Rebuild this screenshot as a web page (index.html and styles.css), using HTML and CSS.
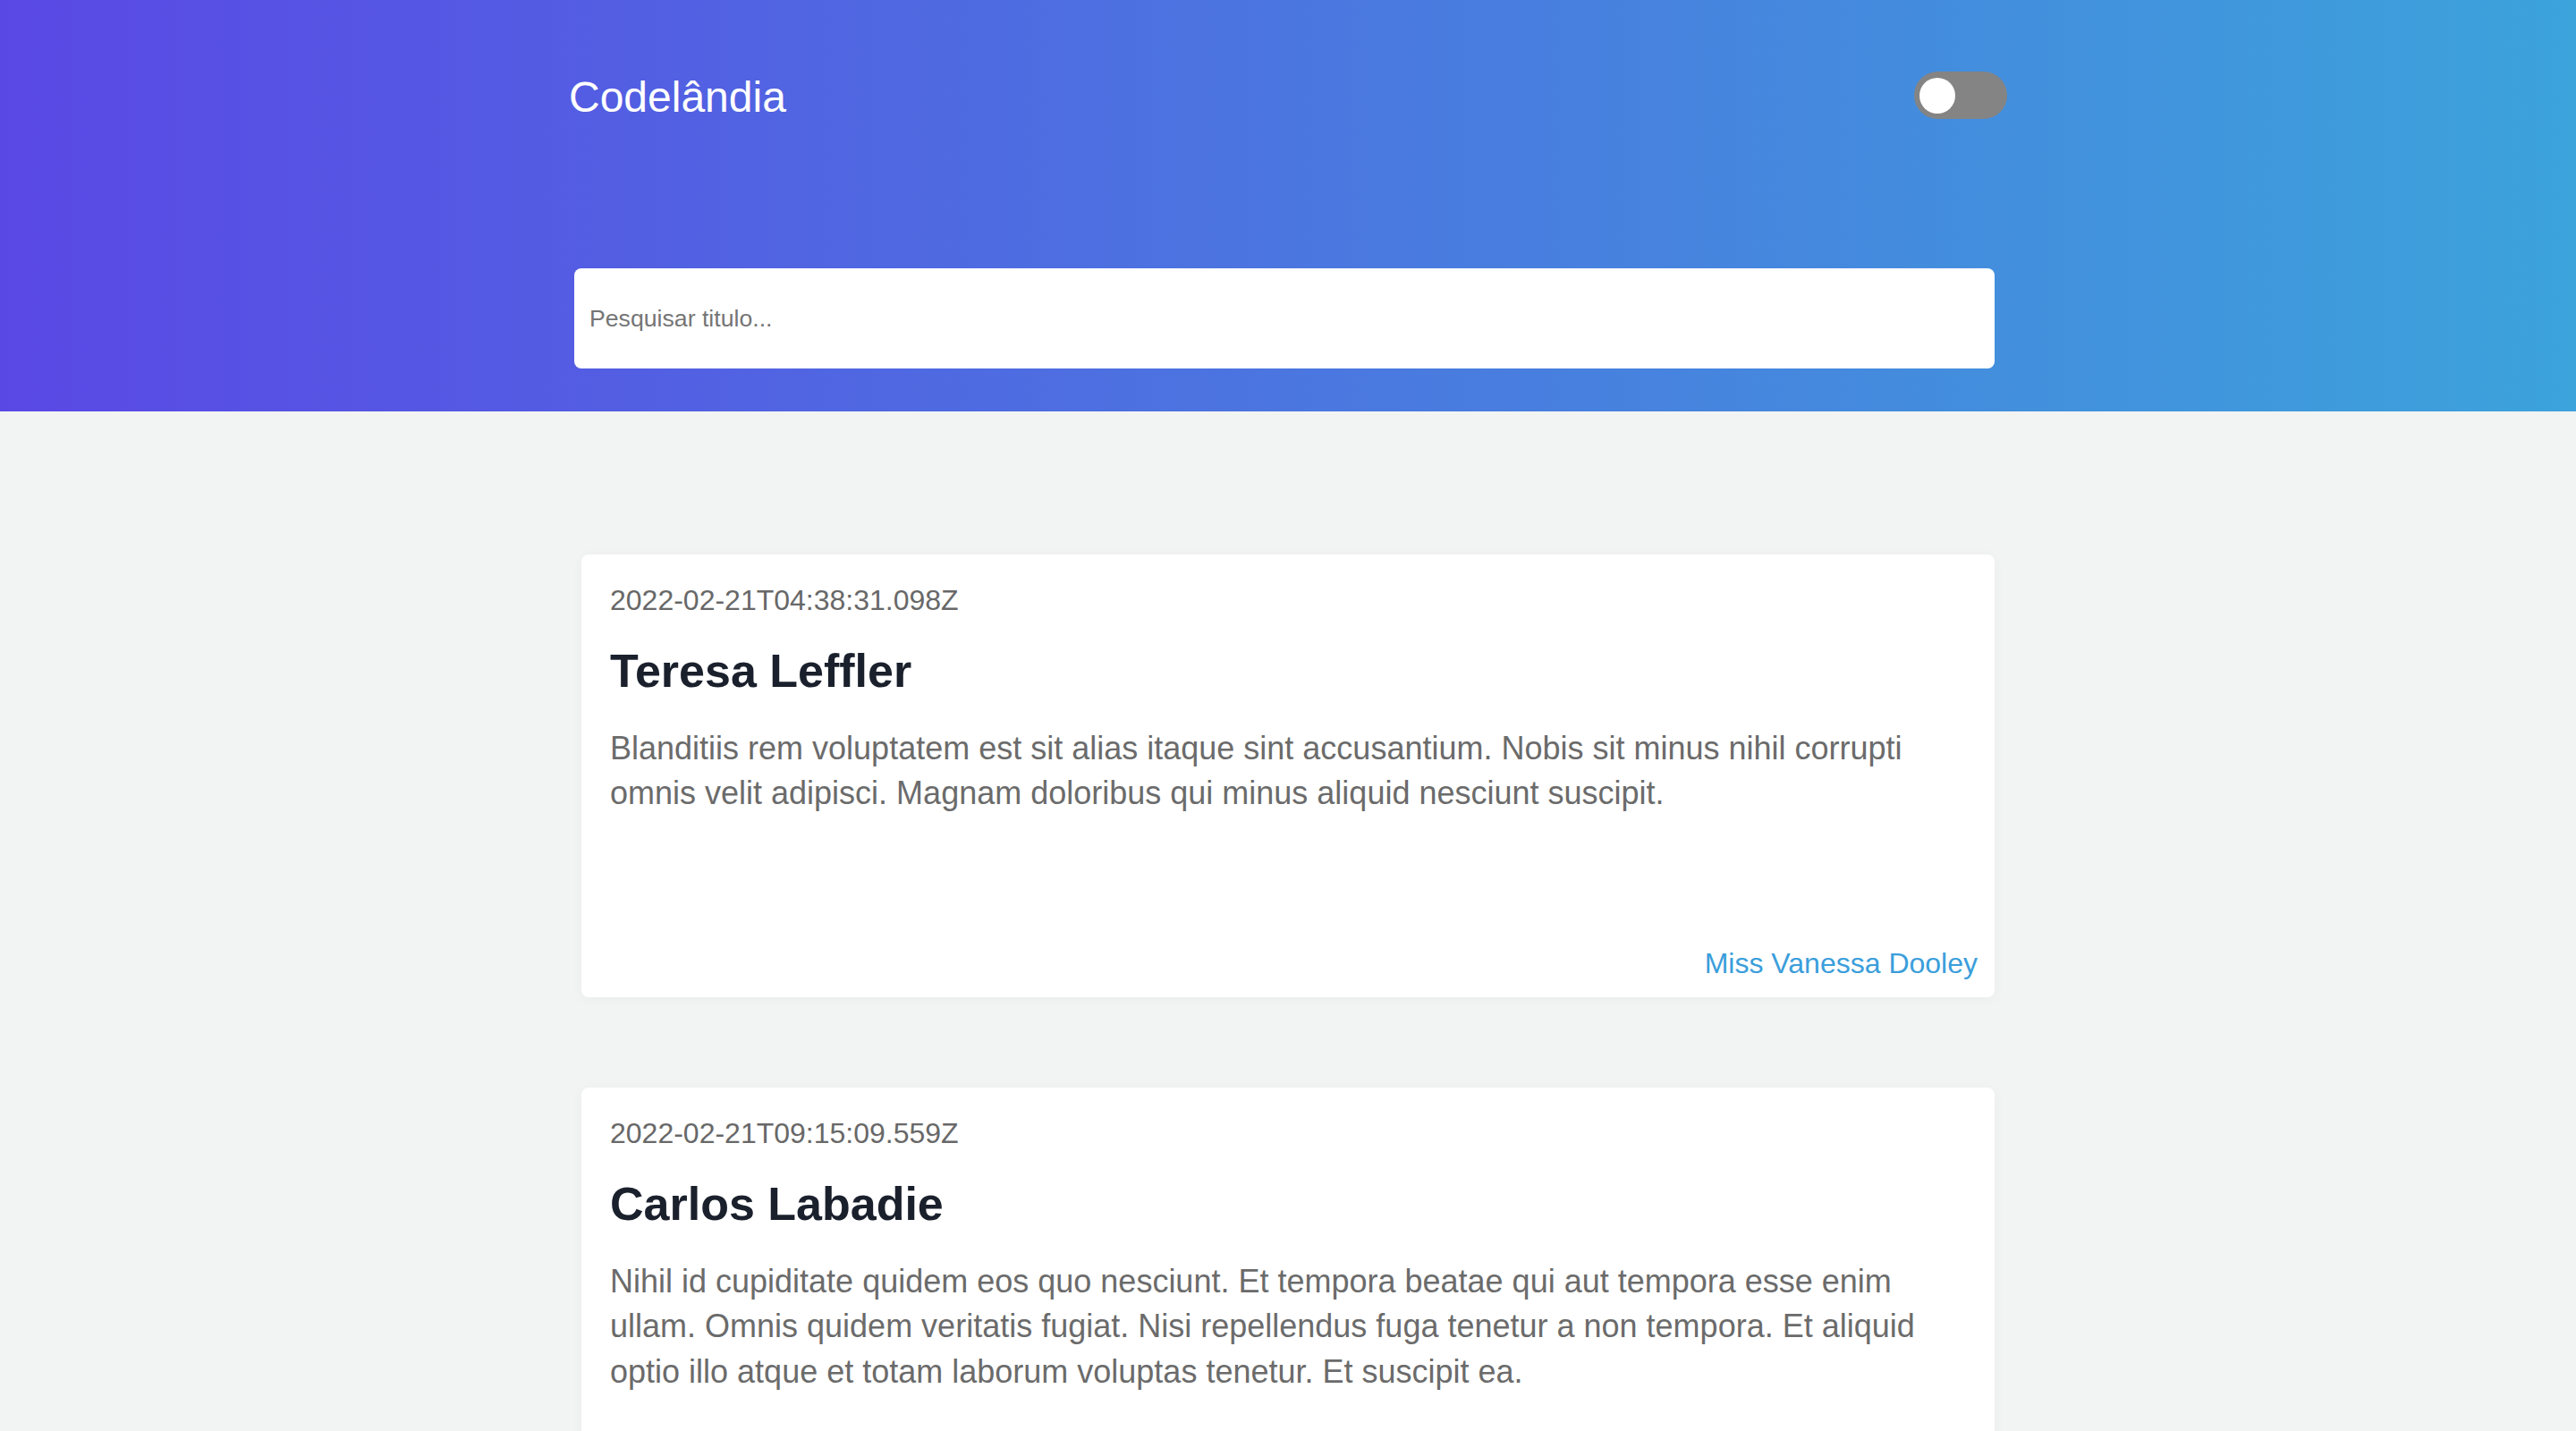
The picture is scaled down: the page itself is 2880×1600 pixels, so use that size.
FILE: index.html
```html
<!DOCTYPE html>
<html lang="pt-BR">
<head>
<meta charset="utf-8">
<title>Codelândia</title>
<link rel="stylesheet" href="styles.css">
</head>
<body>
<header class="header">
  <div class="header-inner">
    <div class="topbar">
      <h1 class="brand">Codelândia</h1>
      <label class="toggle"><span class="knob"></span></label>
    </div>
    <div class="search-wrap">
      <input class="search" type="text" placeholder="Pesquisar titulo...">
    </div>
  </div>
</header>
<main class="posts">
  <article class="card">
    <time class="date">2022-02-21T04:38:31.098Z</time>
    <h2 class="title">Teresa Leffler</h2>
    <p class="body">Blanditiis rem voluptatem est sit alias itaque sint accusantium. Nobis sit minus nihil corrupti omnis velit adipisci. Magnam doloribus qui minus aliquid nesciunt suscipit.</p>
    <span class="author">Miss Vanessa Dooley</span>
  </article>
  <article class="card">
    <time class="date">2022-02-21T09:15:09.559Z</time>
    <h2 class="title">Carlos Labadie</h2>
    <p class="body">Nihil id cupiditate quidem eos quo nesciunt. Et tempora beatae qui aut tempora esse enim ullam. Omnis quidem veritatis fugiat. Nisi repellendus fuga tenetur a non tempora. Et aliquid optio illo atque et totam laborum voluptas tenetur. Et suscipit ea.</p>
    <span class="author">Ms. Lorena Kuhn</span>
  </article>
</main>
</body>
</html>
```

FILE: styles.css
```css
* { box-sizing: border-box; }

html, body {
  margin: 0;
  padding: 0;
}

body {
  background: #f2f4f3;
  font-family: "Liberation Sans", Arial, sans-serif;
  overflow: hidden;
}

.header {
  background: linear-gradient(90deg, #5a48e5 0%, #4b76e0 50%, #3ca3db 100%);
  padding: 80px 0 48px;
}

.header-inner {
  width: 1608px;
  margin: 0 auto;
}

.topbar {
  display: flex;
  justify-content: space-between;
  align-items: flex-start;
}

.brand {
  margin: 1px 0 0;
  font-size: 48px;
  font-weight: 400;
  color: #ffffff;
  line-height: normal;
}

.toggle {
  display: flex;
  align-items: center;
  width: 104px;
  height: 53px;
  padding: 0 6px;
  border-radius: 27px;
  background: #848484;
}

.knob {
  width: 40px;
  height: 40px;
  border-radius: 50%;
  background: #ffffff;
}

.search-wrap {
  margin-top: 164px;
  padding-left: 6px;
}

.search {
  display: block;
  width: 1588px;
  height: 112px;
  border: none;
  outline: none;
  border-radius: 8px;
  background: #ffffff;
  padding: 0 17px;
  font-family: "Liberation Sans", Arial, sans-serif;
  font-size: 26.67px;
  color: #333;
}

.search::placeholder {
  color: #757575;
}

.posts {
  width: 1580px;
  margin: 160px auto 0;
  display: flex;
  flex-direction: column;
  gap: 101px;
}

.card {
  display: flex;
  flex-direction: column;
  min-height: 495px;
  background: #ffffff;
  border-radius: 8px;
  padding: 33px 19px 19px 32px;
  box-shadow: 0 2px 14px rgba(0, 0, 0, 0.035);
}

.date {
  font-size: 32px;
  color: #686868;
  line-height: normal;
}

.title {
  margin: 30px 0 0;
  font-size: 52px;
  font-weight: 700;
  color: #1a202c;
  line-height: normal;
}

.body {
  margin: 32px 0 0;
  font-size: 36px;
  line-height: 50.4px;
  color: #6b6b6b;
}

.author {
  margin-top: auto;
  align-self: flex-end;
  font-size: 32px;
  line-height: normal;
  color: #3b9edb;
}
```
